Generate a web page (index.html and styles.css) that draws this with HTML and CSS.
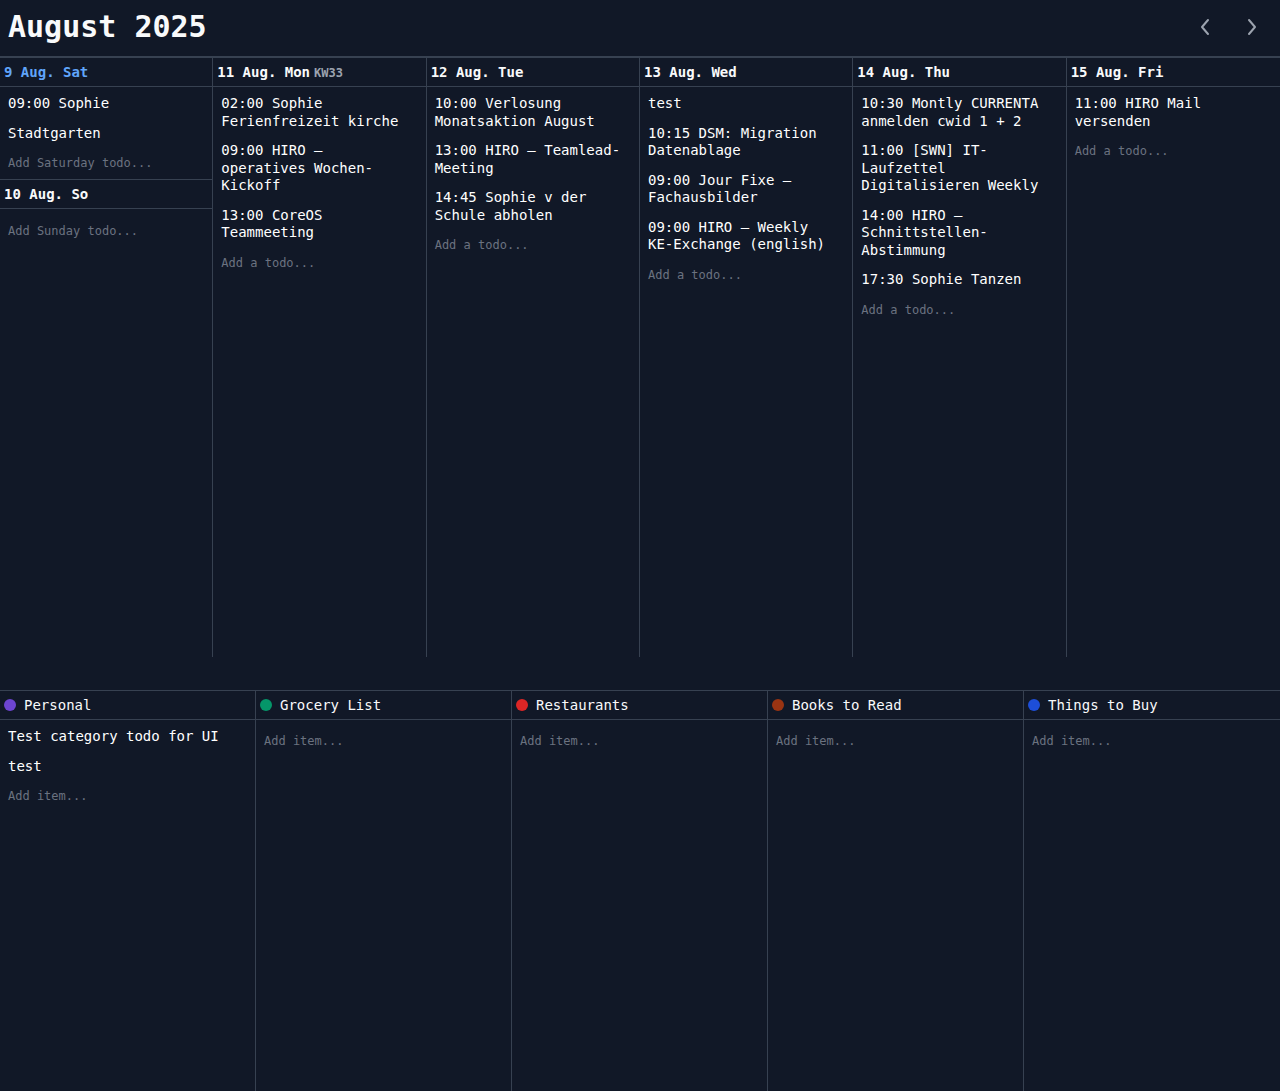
FILE: index.html
```html
<!DOCTYPE html>
<html lang="en">
<head>
<meta charset="utf-8">
<title>August 2025</title>
<link rel="stylesheet" href="styles.css">
</head>
<body>
<div class="app">
  <header class="topbar">
    <h1 class="title">August 2025</h1>
    <nav class="nav">
      <button class="navbtn" aria-label="Previous"><svg width="12" height="18" viewBox="0 0 12 18"><path d="M9 2 L3 9 L9 16" fill="none" stroke="currentColor" stroke-width="2" stroke-linecap="round" stroke-linejoin="round"/></svg></button>
      <button class="navbtn" aria-label="Next"><svg width="12" height="18" viewBox="0 0 12 18"><path d="M3 2 L9 9 L3 16" fill="none" stroke="currentColor" stroke-width="2" stroke-linecap="round" stroke-linejoin="round"/></svg></button>
    </nav>
  </header>

  <section class="week">
    <div class="day weekend">
      <div class="daypart">
        <div class="dayhead today">9 Aug. Sat</div>
        <div class="list">
          <div class="item">09:00 Sophie</div>
          <div class="item">Stadtgarten</div>
          <div class="add">Add Saturday todo...</div>
        </div>
      </div>
      <div class="daypart sunday">
        <div class="dayhead">10 Aug. So</div>
        <div class="list">
          <div class="add">Add Sunday todo...</div>
        </div>
      </div>
    </div>
    <div class="day">
      <div class="dayhead">11 Aug. Mon<span class="kw">KW33</span></div>
      <div class="list">
        <div class="item">02:00 Sophie Ferienfreizeit kirche</div>
        <div class="item">09:00 HIRO – operatives Wochen-Kickoff</div>
        <div class="item">13:00 CoreOS Teammeeting</div>
        <div class="add">Add a todo...</div>
      </div>
    </div>
    <div class="day">
      <div class="dayhead">12 Aug. Tue</div>
      <div class="list">
        <div class="item">10:00 Verlosung Monatsaktion August</div>
        <div class="item">13:00 HIRO – Teamlead-Meeting</div>
        <div class="item">14:45 Sophie v der Schule abholen</div>
        <div class="add">Add a todo...</div>
      </div>
    </div>
    <div class="day">
      <div class="dayhead">13 Aug. Wed</div>
      <div class="list">
        <div class="item">test</div>
        <div class="item">10:15 DSM: Migration Datenablage</div>
        <div class="item">09:00 Jour Fixe – Fachausbilder</div>
        <div class="item">09:00 HIRO – Weekly KE-Exchange (english)</div>
        <div class="add">Add a todo...</div>
      </div>
    </div>
    <div class="day">
      <div class="dayhead">14 Aug. Thu</div>
      <div class="list">
        <div class="item">10:30 Montly CURRENTA anmelden cwid 1 + 2</div>
        <div class="item">11:00 [SWN] IT-Laufzettel Digitalisieren Weekly</div>
        <div class="item">14:00 HIRO – Schnittstellen-Abstimmung</div>
        <div class="item">17:30 Sophie Tanzen</div>
        <div class="add">Add a todo...</div>
      </div>
    </div>
    <div class="day last">
      <div class="dayhead">15 Aug. Fri</div>
      <div class="list">
        <div class="item">11:00 HIRO Mail versenden</div>
        <div class="add">Add a todo...</div>
      </div>
    </div>
  </section>

  <section class="cats">
    <div class="cat">
      <div class="cathead"><span class="dot purple"></span>Personal</div>
      <div class="list">
        <div class="item">Test category todo for UI</div>
        <div class="item">test</div>
        <div class="add">Add item...</div>
      </div>
    </div>
    <div class="cat">
      <div class="cathead"><span class="dot green"></span>Grocery List</div>
      <div class="list"><div class="add">Add item...</div></div>
    </div>
    <div class="cat">
      <div class="cathead"><span class="dot red"></span>Restaurants</div>
      <div class="list"><div class="add">Add item...</div></div>
    </div>
    <div class="cat">
      <div class="cathead"><span class="dot brown"></span>Books to Read</div>
      <div class="list"><div class="add">Add item...</div></div>
    </div>
    <div class="cat last">
      <div class="cathead"><span class="dot blue"></span>Things to Buy</div>
      <div class="list"><div class="add">Add item...</div></div>
    </div>
  </section>
</div>
</body>
</html>
```

FILE: styles.css
```css
* { box-sizing: border-box; }
html, body {
  margin: 0;
  padding: 0;
  height: 100%;
  background: #111827;
  color: #f3f4f6;
  font-family: "DejaVu Sans Mono", "Liberation Mono", monospace;
}
.app {
  height: 100vh;
  display: flex;
  flex-direction: column;
}
.topbar {
  height: 58px;
  display: flex;
  align-items: center;
  justify-content: space-between;
  padding: 0 22px 2px 8px;
  border-bottom: 2px solid #374151;
  flex: none;
}
.title {
  margin: 0;
  font-size: 30px;
  font-weight: bold;
  line-height: 36px;
  color: #f9fafb;
}
.nav {
  display: flex;
  gap: 35px;
  align-items: center;
}
.navbtn {
  background: none;
  border: 0;
  padding: 0;
  color: #9ca3af;
  display: flex;
  width: 12px;
  height: 18px;
}
.week {
  display: grid;
  grid-template-columns: repeat(6, 1fr);
  height: 599px;
  flex: none;
}
.day {
  border-right: 1px solid #374151;
  display: flex;
  flex-direction: column;
  min-width: 0;
}
.day.last { border-right: 0; }
.dayhead {
  height: 29px;
  line-height: 28px;
  padding: 0 4px;
  font-size: 14px;
  font-weight: bold;
  border-bottom: 1px solid #374151;
  white-space: nowrap;
  color: #f9fafb;
}
.dayhead.today { color: #60a5fa; }
.kw {
  font-size: 12px;
  font-weight: bold;
  color: #9ca3af;
  margin-left: 4px;
}
.list {
  display: flex;
  flex-direction: column;
  gap: 12px;
  padding: 8px 12px 8px 8px;
}
.item {
  font-size: 14px;
  line-height: 17.5px;
  color: #ffffff;
}
.add {
  font-size: 12px;
  line-height: 18px;
  color: #6b7280;
}
.add:first-child { margin-top: 4px; }
.daypart { display: flex; flex-direction: column; }
.daypart:first-child { border-bottom: 1px solid #374151; }
.daypart:first-child .list { padding-bottom: 7px; }
.sunday .add:first-child { margin-top: 5px; }
.cats {
  margin-top: 33px;
  border-top: 1px solid #374151;
  flex: 1;
  display: grid;
  grid-template-columns: repeat(5, 1fr);
}
.cat {
  border-right: 1px solid #374151;
  display: flex;
  flex-direction: column;
  min-width: 0;
}
.cat.last { border-right: 0; }
.cathead {
  height: 29px;
  display: flex;
  align-items: center;
  gap: 8px;
  padding: 0 4px;
  font-size: 14px;
  border-bottom: 1px solid #374151;
  color: #f9fafb;
}
.dot {
  width: 12px;
  height: 12px;
  border-radius: 50%;
  flex: none;
}
.purple { background: #6d45d1; }
.green { background: #059669; }
.red { background: #dc2626; }
.brown { background: #9a3412; }
.blue { background: #1d4ed8; }
```
